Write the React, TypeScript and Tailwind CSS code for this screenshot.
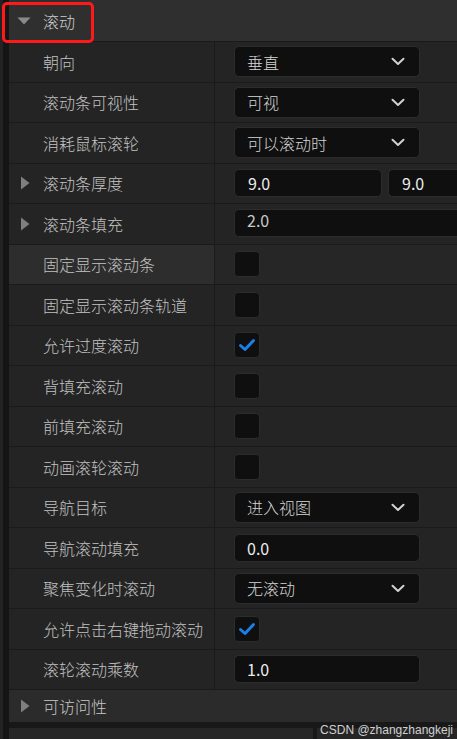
import React from 'react';

type Row =
  | { label: string; kind: 'select'; value: string; expand?: boolean }
  | { label: string; kind: 'number'; value: string; expand?: boolean }
  | { label: string; kind: 'vector'; value: string; expand?: boolean }
  | { label: string; kind: 'check'; checked: boolean; hover?: boolean };

const ROWS: Row[] = [
  { label: '朝向', kind: 'select', value: '垂直' },
  { label: '滚动条可视性', kind: 'select', value: '可视' },
  { label: '消耗鼠标滚轮', kind: 'select', value: '可以滚动时' },
  { label: '滚动条厚度', kind: 'vector', value: '9.0', expand: true },
  { label: '滚动条填充', kind: 'number', value: '2.0', expand: true },
  { label: '固定显示滚动条', kind: 'check', checked: false, hover: true },
  { label: '固定显示滚动条轨道', kind: 'check', checked: false },
  { label: '允许过度滚动', kind: 'check', checked: true },
  { label: '背填充滚动', kind: 'check', checked: false },
  { label: '前填充滚动', kind: 'check', checked: false },
  { label: '动画滚轮滚动', kind: 'check', checked: false },
  { label: '导航目标', kind: 'select', value: '进入视图' },
  { label: '导航滚动填充', kind: 'number', value: '0.0' },
  { label: '聚焦变化时滚动', kind: 'select', value: '无滚动' },
  { label: '允许点击右键拖动滚动', kind: 'check', checked: true },
  { label: '滚轮滚动乘数', kind: 'number', value: '1.0' },
];

const font = { fontFamily: '"Noto Sans CJK SC", "Noto Sans", sans-serif' };

function RightTri() {
  return (
    <svg width="10" height="14" viewBox="0 0 10 14" className="shrink-0">
      <path d="M1 0.5 L9.5 7 L1 13.5 Z" fill="#7f7f7f" />
    </svg>
  );
}

function DownTri() {
  return (
    <svg width="14" height="8" viewBox="0 0 14 8" className="shrink-0">
      <path d="M0.5 0.5 L13.5 0.5 L7 7.5 Z" fill="#8a8a8a" />
    </svg>
  );
}

function Chevron() {
  return (
    <svg width="14" height="9" viewBox="0 0 14 9">
      <path d="M1.5 1.8 L7 7 L12.5 1.8" fill="none" stroke="#d2d2d2" strokeWidth="2" strokeLinecap="round" strokeLinejoin="round" />
    </svg>
  );
}

function Value({ row }: { row: Row }) {
  if (row.kind === 'select') {
    return (
      <div className="ml-[19px] w-[186px] h-[31px] rounded-[5px] bg-[#0f0f0f] border border-[#2c2c2c] flex items-center justify-between pl-[12px] pr-[14px]">
        <span className="text-[16px] font-light text-[#d6d6d6]">{row.value}</span>
        <Chevron />
      </div>
    );
  }
  if (row.kind === 'number') {
    const full = row.expand;
    return (
      <div
        className={`ml-[19px] h-[28px] rounded-[5px] bg-[#0f0f0f] border border-[#2c2c2c] flex items-center pl-[12px] ${
          full ? 'flex-1 rounded-r-none border-r-0 self-start mt-[5px]' : 'w-[186px]'
        }`}
      >
        <span className={`text-[16px] ${full ? 'text-[#c8c8c8] -mt-[6px]' : 'text-[#ececec]'}`}>{row.value}</span>
      </div>
    );
  }
  if (row.kind === 'vector') {
    return (
      <div className="ml-[19px] flex-1 flex gap-[6px]">
        <div className="w-[148px] h-[28px] rounded-[5px] bg-[#0f0f0f] border border-[#2c2c2c] flex items-center pl-[13px]">
          <span className="text-[16px] text-[#ececec]">{row.value}</span>
        </div>
        <div className="flex-1 h-[28px] rounded-l-[5px] bg-[#0f0f0f] border border-r-0 border-[#2c2c2c] flex items-center pl-[13px]">
          <span className="text-[16px] text-[#ececec]">{row.value}</span>
        </div>
      </div>
    );
  }
  return (
    <div className="ml-[19px] w-[26px] h-[26px] rounded-[4px] bg-[#0f0f0f] border border-[#2c2c2c] flex items-center justify-center">
      {row.checked && (
        <svg width="18" height="14" viewBox="0 0 18 14">
          <path d="M2.5 7.5 L7 11.5 L15.5 2.5" fill="none" stroke="#1a7fe6" strokeWidth="3" strokeLinecap="round" strokeLinejoin="round" />
        </svg>
      )}
    </div>
  );
}

export default function App() {
  return (
    <div className="w-[457px] h-[739px] bg-[#1c1c1c] flex overflow-hidden" style={font}>
      {/* left edge strip */}
      <div className="w-[9px] shrink-0 flex">
        <div className="w-[3px] bg-[#232323]" />
        <div className="w-[6px] bg-[#151515]" />
      </div>

      <div className="flex-1 flex flex-col min-w-0">
        {/* category header */}
        <div className="h-[42px] shrink-0 bg-[#2f2f2f] border-b border-[#1a1a1a] flex items-center relative">
          <div className="pl-[8px] flex items-center gap-[12px]">
            <DownTri />
            <span className="text-[16px] font-light text-[#d0d0d0]">滚动</span>
          </div>
          <div className="absolute left-[-7px] top-[2px] w-[92px] h-[41px] border-[3px] border-[#ff1a1a] rounded-[5px]" />
        </div>

        {ROWS.map((row, i) => {
          const hover = row.kind === 'check' && row.hover;
          return (
            <div
              key={i}
              className={`h-[40.5px] shrink-0 flex border-b border-[#1a1a1a] ${hover ? 'bg-[#2d2d2d]' : 'bg-[#242424]'}`}
            >
              <div className="w-[206px] shrink-0 flex items-center border-r border-[#1a1a1a]">
                <div className="w-[34px] pl-[11px] flex items-center">
                  {'expand' in row && row.expand ? <RightTri /> : null}
                </div>
                <span className="text-[16px] font-light text-[#c2c2c2] whitespace-nowrap">{row.label}</span>
              </div>
              <div className={`flex-1 flex items-center min-w-0 ${hover ? 'bg-[#262626]' : ''}`}>
                <Value row={row} />
              </div>
            </div>
          );
        })}

        {/* collapsed category */}
        <div className="h-[32px] shrink-0 bg-[#2b2b2b] flex items-center">
          <div className="w-[34px] pl-[11px] flex items-center">
            <RightTri />
          </div>
          <span className="text-[16px] font-light text-[#c8c8c8]">可访问性</span>
        </div>

        {/* bottom panels */}
        <div className="h-[6px] shrink-0 bg-[#181818]" />
        <div className="flex-1 flex bg-[#181818] relative">
          <div className="w-[304px] bg-[#262626]" />
          <div className="w-[4px]" />
          <div className="flex-1 bg-[#262626]" />
          <span
            className="absolute right-[4px] top-[-7px] text-[12px] text-[#d0d0d0]"
            style={{ fontFamily: '"Liberation Sans", Arial, sans-serif' }}
          >
            CSDN @zhangzhangkeji
          </span>
        </div>
      </div>
    </div>
  );
}
